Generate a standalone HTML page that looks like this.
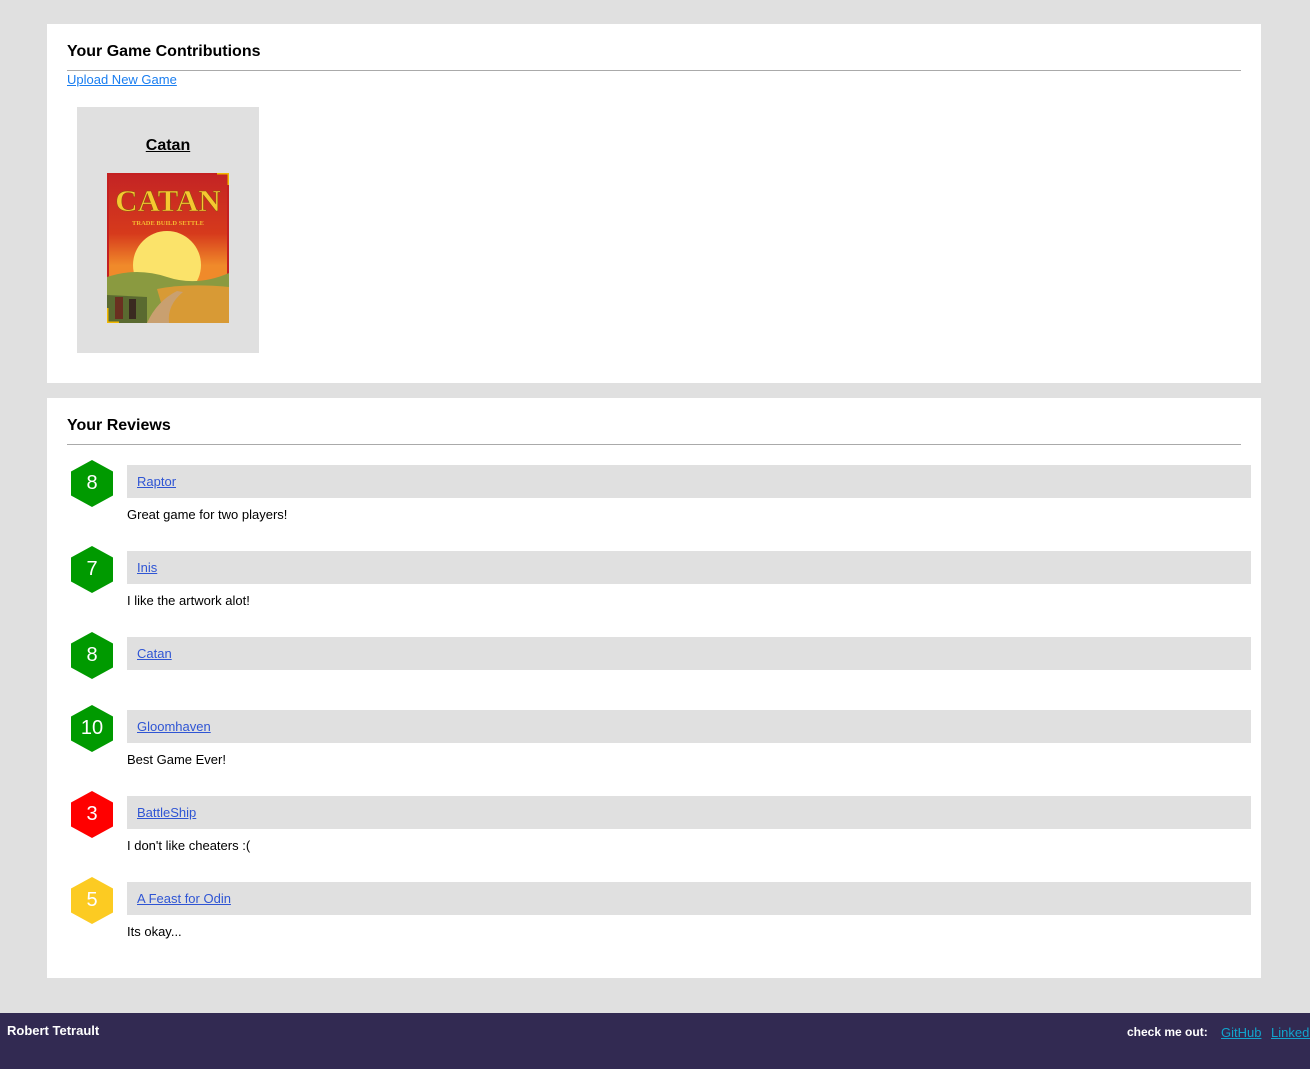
<!DOCTYPE html>
<html><head><meta charset="utf-8"><style>
*{margin:0;padding:0;box-sizing:border-box}
body{width:1310px;height:1069px;background:#e0e0e0;font-family:"Liberation Sans",Arial,sans-serif;position:relative;overflow:hidden}
.card{position:absolute;left:47px;width:1214px;background:#fff}
.abs{position:absolute;white-space:nowrap}
h2{font-size:16px;font-weight:bold;color:#000}
.hr{position:absolute;left:20px;width:1174px;height:1px;background:#aaa}
.bar{position:absolute;left:80px;width:1124px;height:33px;background:#e0e0e0}
.bar a{position:absolute;left:10px;top:9px;font-size:13px;color:#2f55d4;text-decoration:underline}
.cm{position:absolute;left:80px;font-size:13px;color:#000}
.hex{position:absolute;left:24px;width:42px;height:47px}
.hex span{position:absolute;left:0;right:0;top:12px;text-align:center;color:#fff;font-size:20px}
footer{position:absolute;left:0;top:1013px;width:1310px;height:56px;background:#322a52;color:#fff;font-weight:bold;font-size:13px}
</style></head><body>
<div class="card" style="top:24px;height:359px">
  <h2 class="abs" style="left:20px;top:19px">Your Game Contributions</h2>
  <div class="hr" style="top:46px"></div>
  <a class="abs" style="left:20px;top:48px;font-size:13px;color:#1a7ef0;text-decoration:underline">Upload New Game</a>
  <div class="abs" style="left:30px;top:83px;width:182px;height:246px;background:#e0e0e0">
    <div class="abs" style="left:0;right:0;top:30px;text-align:center;font-weight:bold;font-size:16px;text-decoration:underline;color:#000">Catan</div>
    <svg class="abs" style="left:30px;top:66px" width="122" height="150" viewBox="0 0 122 150">
      <defs><linearGradient id="sky" x1="0" y1="0" x2="0" y2="1"><stop offset="0" stop-color="#c42424"/><stop offset="0.4" stop-color="#d63a1c"/><stop offset="0.62" stop-color="#f08a2a"/></linearGradient></defs>
      <rect width="122" height="150" fill="#c42020"/>
      <rect x="2" y="2" width="118" height="146" fill="url(#sky)"/>
      <circle cx="60" cy="92" r="34" fill="#fbe36a"/>
      <path d="M0 104 Q30 94 60 104 T122 100 V150 H0Z" fill="#8a9a40"/>
      <path d="M50 116 Q80 110 122 114 V150 H60Z" fill="#d89a35"/>
      <path d="M40 150 Q50 128 70 118 L76 119 Q60 132 62 150Z" fill="#c9a070"/>
      <path d="M0 122 L40 124 L40 150 L0 150Z" fill="#5a6a30"/>
      <rect x="8" y="124" width="8" height="22" fill="#6a3020"/>
      <rect x="22" y="126" width="7" height="20" fill="#3a2a20"/>
      <text x="61" y="38" text-anchor="middle" font-family="Liberation Serif,serif" font-weight="bold" font-size="31" fill="#f5c830" stroke="#8a5010" stroke-width="0.5">CATAN</text>
      <text x="61" y="52" text-anchor="middle" font-family="Liberation Serif,serif" font-size="6.5" font-weight="bold" fill="#f5b830">TRADE BUILD SETTLE</text>
      <path d="M110 0H122V12" fill="none" stroke="#f2b800" stroke-width="3"/>
      <path d="M0 135V150H12" fill="none" stroke="#f2b800" stroke-width="3"/>
    </svg>
  </div>
</div>
<div class="card" style="top:398px;height:580px">
  <h2 class="abs" style="left:20px;top:19px">Your Reviews</h2>
  <div class="hr" style="top:46px"></div>

  <svg class="hex" style="top:62px" viewBox="0 0 42 47"><polygon points="21,0 42,11.5 42,35.5 21,47 0,35.5 0,11.5" fill="#009a00"/></svg>
  <div class="hex" style="top:62px"><span>8</span></div>
  <div class="bar" style="top:67px"><a>Raptor</a></div>
  <div class="cm" style="top:109px">Great game for two players!</div>

  <svg class="hex" style="top:148px" viewBox="0 0 42 47"><polygon points="21,0 42,11.5 42,35.5 21,47 0,35.5 0,11.5" fill="#009a00"/></svg>
  <div class="hex" style="top:148px"><span>7</span></div>
  <div class="bar" style="top:153px"><a>Inis</a></div>
  <div class="cm" style="top:195px">I like the artwork alot!</div>

  <svg class="hex" style="top:234px" viewBox="0 0 42 47"><polygon points="21,0 42,11.5 42,35.5 21,47 0,35.5 0,11.5" fill="#009a00"/></svg>
  <div class="hex" style="top:234px"><span>8</span></div>
  <div class="bar" style="top:239px"><a>Catan</a></div>

  <svg class="hex" style="top:307px" viewBox="0 0 42 47"><polygon points="21,0 42,11.5 42,35.5 21,47 0,35.5 0,11.5" fill="#009a00"/></svg>
  <div class="hex" style="top:307px"><span>10</span></div>
  <div class="bar" style="top:312px"><a>Gloomhaven</a></div>
  <div class="cm" style="top:354px">Best Game Ever!</div>

  <svg class="hex" style="top:393px" viewBox="0 0 42 47"><polygon points="21,0 42,11.5 42,35.5 21,47 0,35.5 0,11.5" fill="#ff0000"/></svg>
  <div class="hex" style="top:393px"><span>3</span></div>
  <div class="bar" style="top:398px"><a>BattleShip</a></div>
  <div class="cm" style="top:440px">I don't like cheaters :(</div>

  <svg class="hex" style="top:479px" viewBox="0 0 42 47"><polygon points="21,0 42,11.5 42,35.5 21,47 0,35.5 0,11.5" fill="#fccb22"/></svg>
  <div class="hex" style="top:479px"><span>5</span></div>
  <div class="bar" style="top:484px"><a>A Feast for Odin</a></div>
  <div class="cm" style="top:526px">Its okay...</div>
</div>
<footer>
  <div class="abs" style="left:7px;top:10px">Robert Tetrault</div>
  <div class="abs" style="left:1127px;top:12px;font-size:12px">check me out:</div>
  <a class="abs" style="left:1221px;top:12px;font-weight:normal;color:#12a4cc;text-decoration:underline">GitHub</a>
  <a class="abs" style="left:1271px;top:12px;font-weight:normal;color:#12a4cc;text-decoration:underline">LinkedIn</a>
</footer>
</body></html>
